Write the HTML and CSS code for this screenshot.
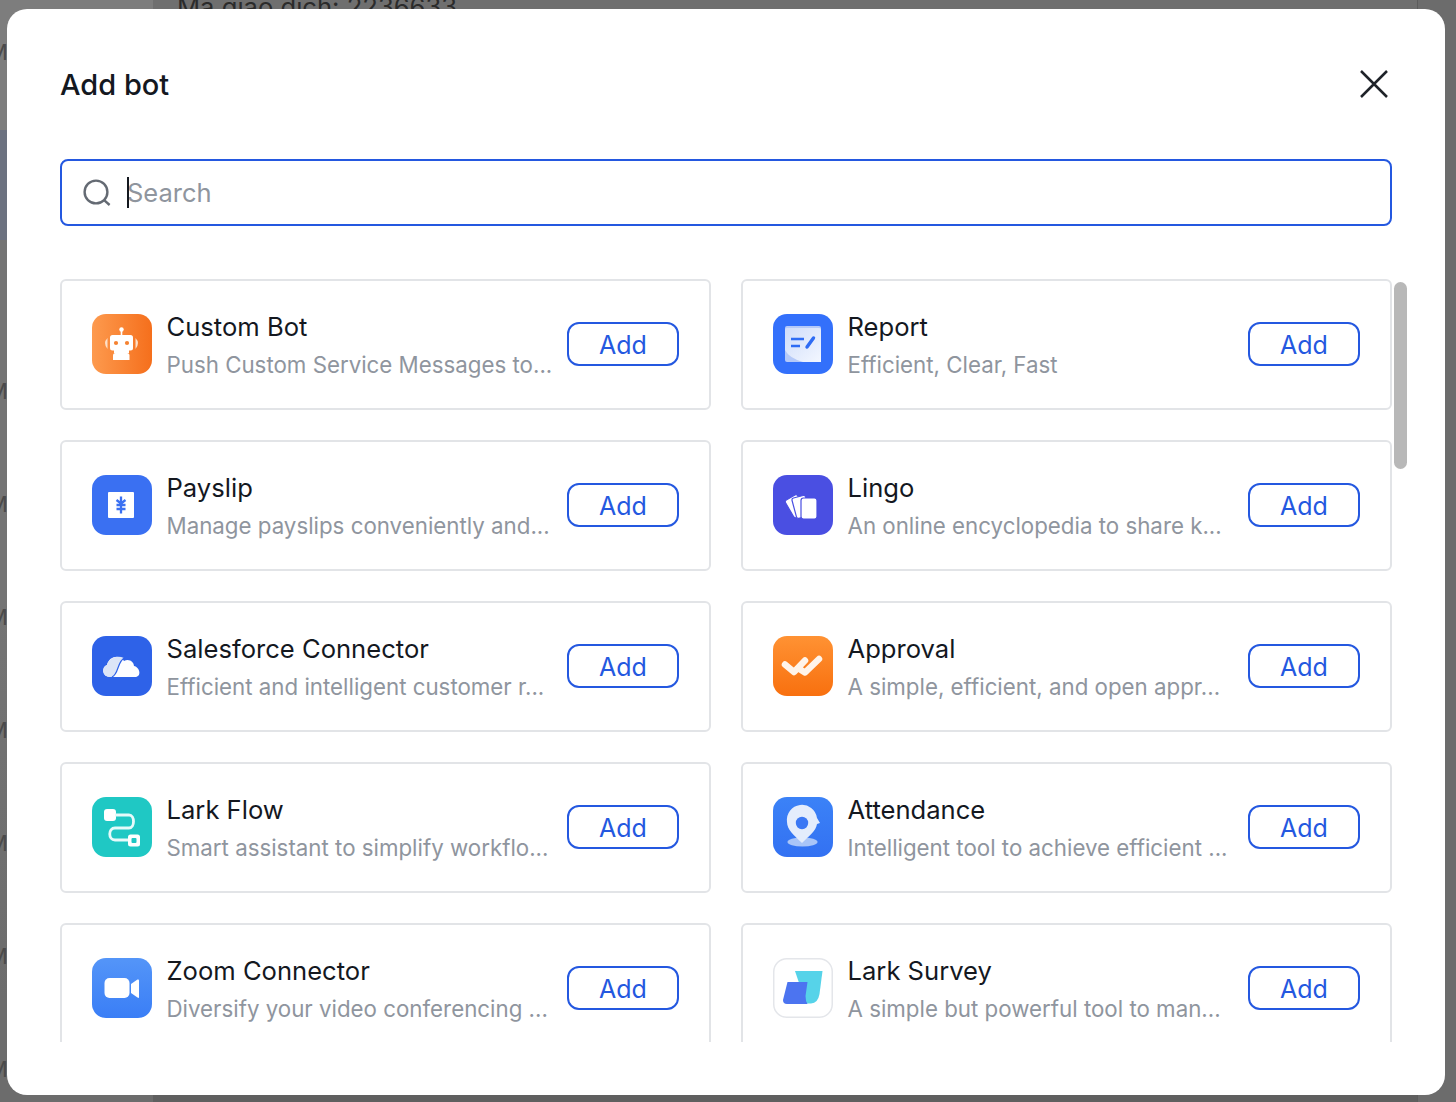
FILE: index.html
```html
<!DOCTYPE html>
<html lang="en">
<head>
<meta charset="utf-8">
<title>Add bot</title>
<link rel="stylesheet" href="styles.css">
</head>
<body>
<div class="backdrop" aria-hidden="true">
  <div class="bg-side"><span>M</span><span>/</span><span>/</span><span>M</span><span>M</span><span>M</span><span>M</span><span>M</span><span>M</span><span>M</span></div>
  <div class="bg-main"><p class="bg-text">Mã giao dịch: 2236633</p></div>
  <div class="bg-right"></div>
</div>
<main class="modal">
  <header class="modal-head">
    <h1 class="modal-title">Add bot</h1>
    <svg class="close" viewBox="0 0 30 30"><path d="M2 2 L28 28 M28 2 L2 28"/></svg>
  </header>
  <div class="search">
    <svg class="search-icon" viewBox="0 0 28 28"><circle cx="13" cy="13" r="11.4"/><path d="M21.4 21.4 L26.6 26"/></svg>
    <span class="placeholder">Search</span>
  </div>
  <div class="list-wrap">
    <div class="list">
      <article class="card">
        <svg class="app" viewBox="0 0 60 60"><defs><linearGradient id="g1" x1="0" x2="1" y1="0" y2="0"><stop offset="0" stop-color="#fd9a4e"/><stop offset="1" stop-color="#f56f1c"/></linearGradient></defs><rect width="60" height="60" rx="14" fill="url(#g1)"/><circle cx="29.500" cy="15.500" r="2.200" fill="#fff"/><rect x="28.700" y="16" width="1.600" height="6" fill="#fff"/><rect x="18" y="21" width="23" height="15.500" rx="2.500" fill="#fff"/><rect x="22" y="36" width="15" height="3" fill="#fff"/><path d="M21 46 V41.500 Q21 39 23.500 39 H35 Q37.500 39 37.500 41.500 V46Z" fill="#fff"/><path d="M15.500 24 Q10.500 29 15.500 35Z M43.500 24 Q48.500 29 43.500 35Z" fill="#fde0c8"/><circle cx="24" cy="29" r="2.100" fill="#f58231"/><circle cx="35" cy="29" r="2.100" fill="#f58231"/></svg>
        <div class="info"><h2>Custom Bot</h2><p>Push Custom Service Messages to...</p></div>
        <button class="add">Add</button>
      </article>
      <article class="card">
        <svg class="app" viewBox="0 0 60 60"><defs><linearGradient id="g2" x1="0" x2="1" y1="0" y2="1"><stop offset="0" stop-color="#cfdcfa"/><stop offset="1" stop-color="#f3f7ff"/></linearGradient></defs><rect width="60" height="60" rx="14" fill="#3370fb"/><rect x="12" y="12" width="36" height="36" rx="2" fill="#b5c9f8"/><path d="M14 14 H46 Q48 14 48 16 V48 H30 Q16 44 12 36 V16 Q12 14 14 14Z" fill="url(#g2)"/><path d="M18 25 H31 M18 32 H27" stroke="#2f6cf4" stroke-width="2.600" fill="none"/><path d="M40.500 24 L34 33" stroke="#2f6cf4" stroke-width="3.400" stroke-linecap="round" fill="none"/></svg>
        <div class="info"><h2>Report</h2><p>Efficient, Clear, Fast</p></div>
        <button class="add">Add</button>
      </article>
      <article class="card">
        <svg class="app" viewBox="0 0 60 60"><rect width="60" height="60" rx="14" fill="#3a70f2"/><rect x="16" y="17" width="26" height="26" rx="1" fill="#fff"/><path d="M29 21.500 V38.500 M24.500 25 L29 28.500 L33.500 25 M24.500 30 H33.500 M24.500 34 H33.500" stroke="#3a70f2" stroke-width="2.300" fill="none"/></svg>
        <div class="info"><h2>Payslip</h2><p>Manage payslips conveniently and...</p></div>
        <button class="add">Add</button>
      </article>
      <article class="card">
        <svg class="app" viewBox="0 0 60 60"><rect width="60" height="60" rx="14" fill="#4a4fe2"/><rect x="22" y="19" width="14" height="20" rx="2" fill="#fff" stroke="#4a4fe2" stroke-width="1.200" transform="rotate(-30 30 42)"/><rect x="24" y="21" width="14" height="21" rx="2" fill="#fff" stroke="#4a4fe2" stroke-width="1.200" transform="rotate(-15 31 43)"/><rect x="28" y="23" width="16" height="21" rx="2.500" fill="#fff" stroke="#4a4fe2" stroke-width="1.200"/></svg>
        <div class="info"><h2>Lingo</h2><p>An online encyclopedia to share k...</p></div>
        <button class="add">Add</button>
      </article>
      <article class="card">
        <svg class="app" viewBox="0 0 60 60"><defs><linearGradient id="g3" x1="0" x2="0" y1="0" y2="1"><stop offset="0" stop-color="#ff9233"/><stop offset="1" stop-color="#f8700f"/></linearGradient></defs><rect width="60" height="60" rx="14" fill="#2e62e8"/><path d="M18 41 C10 41 9 31 15 29 C17 20 28 18 32 25 C37 22 42 26 42 30 C48 31 50 41 43 41Z" fill="#fdfdff"/><path d="M18 41 C10 41 9 31 15 29 C17 22 25 19 32 22 C25 26 27 38 20 41Z" fill="#dce5f7"/><path d="M33 21.500 C25 25 27 38 20 41" stroke="#2e62e8" stroke-width="1.300" fill="none"/></svg>
        <div class="info"><h2>Salesforce Connector</h2><p>Efficient and intelligent customer r...</p></div>
        <button class="add">Add</button>
      </article>
      <article class="card">
        <svg class="app" viewBox="0 0 60 60"><rect width="60" height="60" rx="14" fill="url(#g3)"/><path d="M12 28.500 L21 36 L32 24.500 M28 34 L32 36.500 L46 23" stroke="#fff4ea" stroke-width="6.500" fill="none" stroke-linejoin="round" stroke-linecap="round"/></svg>
        <div class="info"><h2>Approval</h2><p>A simple, efficient, and open appr...</p></div>
        <button class="add">Add</button>
      </article>
      <article class="card">
        <svg class="app" viewBox="0 0 60 60"><rect width="60" height="60" rx="14" fill="#1fc8c4"/><rect x="12" y="12" width="12" height="12" rx="3" fill="#fff"/><path d="M23 18 H37 C43 18 43 31 37 31 H23 C16 31 16 43 23 43 H37" stroke="#e6fafa" stroke-width="2.800" fill="none"/><rect x="36" y="37.500" width="12" height="12" rx="2.500" fill="#fff"/><rect x="39.500" y="41" width="5" height="5" rx="1" fill="#1fc8c4"/></svg>
        <div class="info"><h2>Lark Flow</h2><p>Smart assistant to simplify workflo...</p></div>
        <button class="add">Add</button>
      </article>
      <article class="card">
        <svg class="app" viewBox="0 0 60 60"><defs><linearGradient id="g4" x1="0" x2="0" y1="0" y2="1"><stop offset="0" stop-color="#3b82f7"/><stop offset="1" stop-color="#3371f2"/></linearGradient></defs><rect width="60" height="60" rx="14" fill="url(#g4)"/><ellipse cx="29.500" cy="45" rx="15" ry="4.500" fill="#a9c5f8"/><path d="M29 46 C21 38 14 33 14 25 A15 15 0 0 1 44 21 L47 26 L44 27 C43 34 36 39 29 46Z" fill="#e4edfc"/><circle cx="29" cy="26" r="6.200" fill="#3b78f4"/></svg>
        <div class="info"><h2>Attendance</h2><p>Intelligent tool to achieve efficient ...</p></div>
        <button class="add">Add</button>
      </article>
      <article class="card">
        <svg class="app" viewBox="0 0 60 60"><defs><linearGradient id="g5" x1="0" x2="0" y1="0" y2="1"><stop offset="0" stop-color="#5495f8"/><stop offset="1" stop-color="#3a7ef6"/></linearGradient></defs><rect width="60" height="60" rx="14" fill="url(#g5)"/><rect x="12.500" y="20" width="25" height="20" rx="5" fill="#fff"/><path d="M47 22.500 V39 Q47 40.500 45.500 39.500 L39 35 V26 L45.500 21.500 Q47 21 47 22.500Z" fill="#fff"/></svg>
        <div class="info"><h2>Zoom Connector</h2><p>Diversify your video conferencing ...</p></div>
        <button class="add">Add</button>
      </article>
      <article class="card">
        <svg class="app" viewBox="0 0 60 60"><rect x=".75" y=".75" width="58.500" height="58.500" rx="13" fill="#fff" stroke="#e4e6ea" stroke-width="1.500"/><path d="M22 13 H49.500 L46.500 36 Q45 45 38 45.500 H33 Z" fill="#56d3e9"/><path d="M14.500 24 H34.500 L32.500 38 Q32.500 43 34.500 46 H14 Q10 46 10 42 Z" fill="#4c74f0"/></svg>
        <div class="info"><h2>Lark Survey</h2><p>A simple but powerful tool to man...</p></div>
        <button class="add">Add</button>
      </article>
    </div>
    <div class="thumb"></div>
  </div>
</main>
</body>
</html>
```

FILE: styles.css
```css
* { box-sizing: border-box; }
html, body { margin: 0; height: 100%; overflow: hidden; }
body {
  display: flex;
  padding: 9px 11px 7px 7px;
  background: #6e6e6e;
  font-family: Inter, "Noto Sans", sans-serif;
}
.backdrop {
  position: absolute;
  inset: 0;
  display: flex;
  overflow: hidden;
}
.bg-side {
  width: 165px;
  background: linear-gradient(#7d7d7d 0 130px, #6c7280 130px 240px, #747474 240px 600px, #6c6c6c 1000px);
  display: flex;
  flex-direction: column;
  padding-top: 39px;
  color: #4a4a4a;
  font-size: 22px;
  line-height: 26px;
  gap: 87px;
  margin-left: -12px;
}
.bg-main {
  flex: 1;
  background: linear-gradient(#6f6f6f 0 1095px, #5f5f5f 1095px);
  padding-left: 24px;
}
.bg-text {
  margin: -10px 0 0;
  font-size: 25.600px;
  line-height: 34px;
  color: #2b2b2b;
}
.bg-right { width: 39px; border-left: 1px solid #5c5c5c; background: #6c6c6c; }
.modal {
  position: relative;
  flex: 1;
  background: #fff;
  border-radius: 20px;
  padding: 0 53px;
  display: flex;
  flex-direction: column;
}
.modal-head {
  height: 150px;
  display: flex;
  justify-content: space-between;
  align-items: flex-start;
  padding-top: 56px;
}
.modal-title {
  margin: 0;
  font-size: 29px;
  line-height: 40px;
  font-weight: 500;
  color: #14181f;
}
.close {
  width: 30px;
  height: 30px;
  margin-top: 4px;
  margin-right: 3px;
  fill: none;
  stroke: #1f2329;
  stroke-width: 2.500;
}
.search {
  position: relative;
  height: 67px;
  border: 2px solid #2458e0;
  border-radius: 8px;
  display: flex;
  align-items: center;
  padding-left: 21px;
  gap: 16px;
}
.search-icon {
  width: 28px;
  height: 28px;
  fill: none;
  stroke: #646a73;
  stroke-width: 2.400;
}
.placeholder {
  font-size: 25.500px;
  color: #8f959e;
  position: relative;
}
.placeholder::before {
  content: "";
  position: absolute;
  left: 0;
  top: 0;
  bottom: 0;
  width: 2px;
  background: #14181f;
}
.list-wrap {
  position: relative;
  margin-top: 53px;
}
.list {
  display: grid;
  grid-template-columns: 651px 651px;
  column-gap: 30px;
  row-gap: 30px;
  height: 763px;
  overflow: hidden;
}
.card {
  height: 131px;
  border: 2px solid #e2e4e7;
  border-radius: 6px;
  display: flex;
  align-items: center;
  padding: 0 30px 1px;
  gap: 15px;
}
.app { width: 60px; height: 60px; flex: none; margin-right: -0.500px; }
.info { flex: 1; min-width: 0; padding-top: 3px; }
.info h2 {
  margin: 0 0 5px;
  font-size: 25.600px;
  line-height: 34px;
  font-weight: 400;
  color: #14181f;
}
.info p {
  margin: 0;
  font-size: 22.300px;
  line-height: 32px;
  color: #8f959e;
  white-space: nowrap;
}
.add {
  width: 112px;
  height: 44px;
  flex: none;
  background: #fff;
  border: 2px solid #2458e0;
  border-radius: 12px;
  color: #2458e0;
  font: 400 25px Inter, sans-serif;
  padding: 2px 0 0;
}
.thumb {
  position: absolute;
  left: 1334px;
  top: 3px;
  width: 13px;
  height: 187px;
  border-radius: 7px;
  background: #b8b8b8;
}
```
